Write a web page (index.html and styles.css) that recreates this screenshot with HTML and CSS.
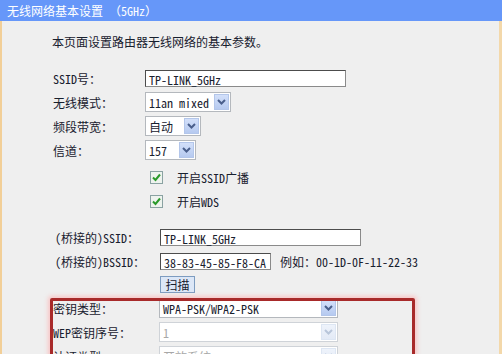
FILE: index.html
```html
<!DOCTYPE html>
<html lang="zh-CN">
<head>
    <meta charset="UTF-8">
    <meta name="viewport" content="width=device-width, initial-scale=1.0">
    <title>无线网络基本设置（5GHz）</title>
    <link rel="stylesheet" href="styles.css">
</head>
<body>

    <div class="title">无线网络基本设置 （5GHz）</div>

    <div class="main">
        <p class="intro">本页面设置路由器无线网络的基本参数。</p>

        <div class="row">
            <span class="label">SSID号：</span>
            <span class="text-field w-ssid">TP-LINK_5GHz</span>
        </div>
        <div class="row">
            <span class="label">无线模式：</span>
            <span class="select w-mode"><span class="value">11an mixed</span><span class="arrow"><svg width="9" height="6"><path d="M1 1l3.5 3.5L8 1" stroke="#4a5f8c" stroke-width="2" fill="none"/></svg></span></span>
        </div>
        <div class="row">
            <span class="label">频段带宽：</span>
            <span class="select w-band"><span class="value">自动</span><span class="arrow"><svg width="9" height="6"><path d="M1 1l3.5 3.5L8 1" stroke="#4a5f8c" stroke-width="2" fill="none"/></svg></span></span>
        </div>
        <div class="row">
            <span class="label">信道：</span>
            <span class="select w-chan"><span class="value">157</span><span class="arrow"><svg width="9" height="6"><path d="M1 1l3.5 3.5L8 1" stroke="#4a5f8c" stroke-width="2" fill="none"/></svg></span></span>
        </div>

        <div class="check-row first">
            <svg class="checkbox" width="13" height="13"><rect x="0.5" y="0.5" width="12" height="12" fill="#eef3ee" stroke="#8aa2a2"/><path d="M3 6.5l2.5 2.5L10 3.5" stroke="#2a9a2a" stroke-width="2" fill="none"/></svg>
            <span>开启SSID广播</span>
        </div>
        <div class="check-row">
            <svg class="checkbox" width="13" height="13"><rect x="0.5" y="0.5" width="12" height="12" fill="#eef3ee" stroke="#8aa2a2"/><path d="M3 6.5l2.5 2.5L10 3.5" stroke="#2a9a2a" stroke-width="2" fill="none"/></svg>
            <span>开启WDS</span>
        </div>

        <div class="bridge">
            <div class="row">
                <span class="label">(桥接的)SSID：</span>
                <span class="text-field w-bssid-name">TP-LINK_5GHz</span>
            </div>
            <div class="row">
                <span class="label">(桥接的)BSSID：</span>
                <span class="text-field w-bssid">38-83-45-85-F8-CA</span>
                <span class="hint">例如：00-1D-0F-11-22-33</span>
            </div>
            <div class="row btn-row">
                <span class="label"></span>
                <button class="scan">扫描</button>
            </div>
        </div>

        <div class="keys">
            <div class="row">
                <span class="label">密钥类型：</span>
                <span class="select w-key"><span class="value">WPA-PSK/WPA2-PSK</span><span class="arrow"><svg width="9" height="6"><path d="M1 1l3.5 3.5L8 1" stroke="#4a5f8c" stroke-width="2" fill="none"/></svg></span></span>
            </div>
            <div class="row">
                <span class="label">WEP密钥序号：</span>
                <span class="select w-key disabled"><span class="value">1</span><span class="arrow"><svg width="9" height="6"><path d="M1 1l3.5 3.5L8 1" stroke="#b9c6da" stroke-width="2" fill="none"/></svg></span></span>
            </div>
            <div class="row">
                <span class="label">认证类型：</span>
                <span class="select w-key disabled"><span class="value">开放系统</span><span class="arrow"><svg width="9" height="6"><path d="M1 1l3.5 3.5L8 1" stroke="#b9c6da" stroke-width="2" fill="none"/></svg></span></span>
            </div>
        </div>
    </div>

</body>
</html>
```

FILE: styles.css
```css
body {
    margin: 0;
    font-family: "Noto Sans Mono CJK SC", "Noto Sans CJK SC", monospace;
    font-size: 12px;
    color: #18202e;
    background-color: #efefef;
    overflow: hidden;
}
.title {
    height: 21px;
    line-height: 21px;
    padding-left: 7px;
    background-color: #6697f9;
    color: #fff;
}
.main {
    border-left: 2px solid #f2cf98;
    border-right: 3px solid #f3d8aa;
    padding-left: 50px;
    height: 333px;
    overflow: hidden;
}
.intro {
    margin: 0;
    padding-top: 11px;
    line-height: 20px;
    margin-bottom: 14px;
}

/* Formularzeilen */
.row {
    display: flex;
    align-items: center;
    height: 24px;
}
.label {
    width: 93px;
    padding-left: 1px;
    box-sizing: border-box;
    flex-shrink: 0;
}
.text-field {
    height: 17px;
    line-height: 17px;
    padding-left: 3px;
    box-sizing: border-box;
    background-color: #fff;
    border: 1px solid #4c4c4c;
    border-right-color: #8a8a8a;
    border-bottom-color: #8a8a8a;
}
.w-ssid { width: 201px; }
.w-bssid-name { width: 201px; }
.w-bssid { width: 111px; }

.select {
    display: flex;
    align-items: center;
    height: 20px;
    box-sizing: border-box;
    border: 1px solid #b4b8bd;
    background-color: #fff;
}
.select .value {
    flex: 1;
    padding-left: 3px;
    white-space: nowrap;
    overflow: hidden;
}
.select .arrow {
    display: flex;
    align-items: center;
    justify-content: center;
    width: 15px;
    height: 16px;
    margin-right: 1px;
    box-sizing: border-box;
    border: 1px solid #b3c6ea;
    background: linear-gradient(#d3e0fa, #b6caf0);
}
.w-mode { width: 86px; }
.w-band { width: 56px; }
.w-chan { width: 51px; }
.w-key { width: 179px; }
.select.disabled {
    border-color: #cfd3d8;
    color: #a8a8a8;
}
.select.disabled .arrow {
    border-color: #dde6f3;
    background: linear-gradient(#eef3fb, #e3eaf6);
}

.check-row {
    display: flex;
    align-items: center;
    height: 24px;
    padding-left: 98px;
}
.check-row.first {
    margin-top: 3px;
}
.checkbox {
    margin-right: 14px;
}

.bridge {
    margin-top: 12px;
}
.bridge .label {
    width: 108px;
    padding-left: 3px;
}
.hint {
    margin-left: 9px;
}
.btn-row {
    height: 23px;
}
.scan {
    font: inherit;
    color: #18202e;
    height: 17px;
    width: 35px;
    padding: 0;
    line-height: 14px;
    border: 1px solid #7d9cc0;
    background-color: #dce7f7;
}

/* rote Markierung um die Verschlüsselung */
.keys {
    position: relative;
}
.keys::before {
    content: "";
    position: absolute;
    top: 2px;
    left: -2px;
    width: 365px;
    height: 90px;
    box-sizing: border-box;
    border: 3px solid #a82a2a;
    border-radius: 2px;
    box-shadow: 0 0 4px 2px rgba(255, 170, 170, 0.6);
    pointer-events: none;
}
.keys .label {
    width: 107px;
}
```
